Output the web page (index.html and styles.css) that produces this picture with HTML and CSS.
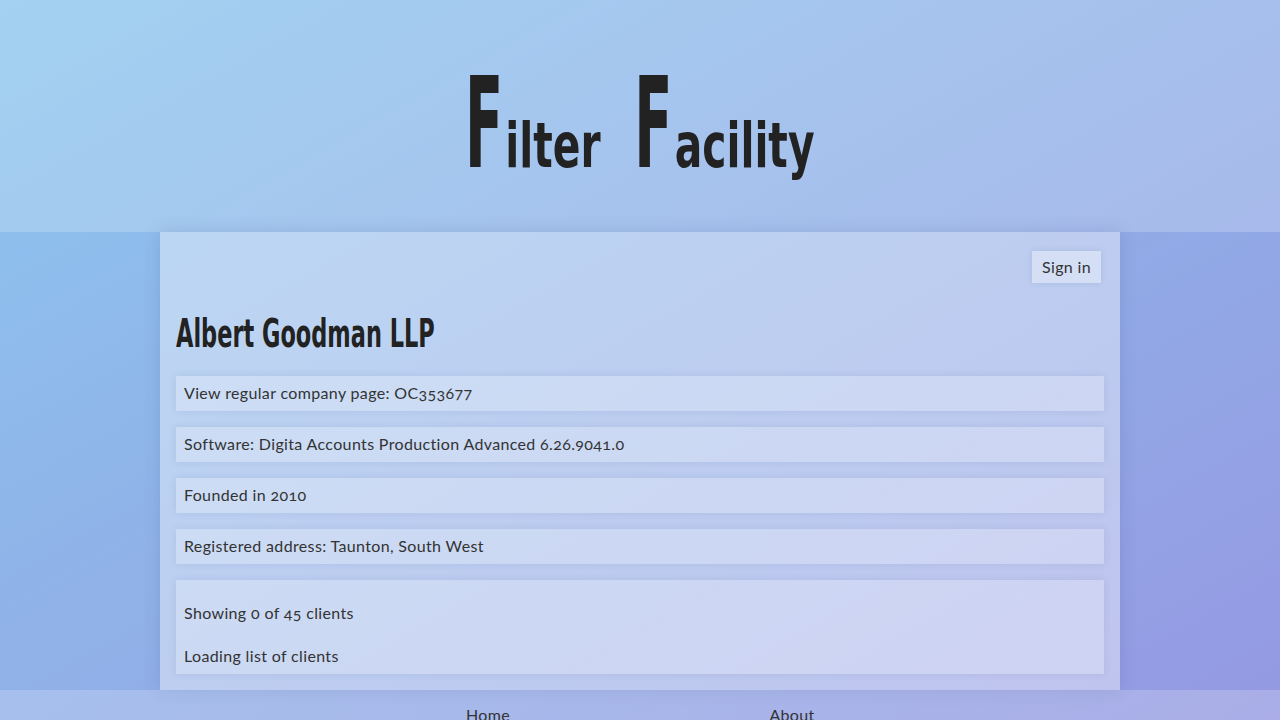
FILE: index.html
```html
<!DOCTYPE html>
<html lang="en">
<head>
<meta charset="utf-8">
<title>Albert Goodman LLP - Filter Facility</title>
<link rel="stylesheet" href="styles.css">
</head>
<body>
<header class="site-header">
  <h1 class="logo"><span class="word"><span class="cap">F</span><span class="rest">ilter</span></span><span class="word"><span class="cap">F</span><span class="rest">acility</span></span></h1>
</header>
<main class="page">
  <div class="toolbar"><button class="btn" type="button">Sign in</button></div>
  <h2 class="company"><span class="company-name">Albert Goodman LLP</span></h2>
  <div class="card"><a class="plain-link" href="#">View regular company page: OC353677</a></div>
  <div class="card">Software: Digita Accounts Production Advanced 6.26.9041.0</div>
  <div class="card">Founded in 2010</div>
  <div class="card">Registered address: Taunton, South West</div>
  <div class="card clients">
    <p class="count">Showing 0 of 45 clients</p>
    <p class="loading">Loading list of clients</p>
  </div>
</main>
<footer class="site-footer">
  <nav class="footer-nav">
    <a href="#">Home</a>
    <a href="#">About</a>
  </nav>
</footer>
</body>
</html>
```
FILE: styles.css
```css
html, body {
  margin: 0;
  padding: 0;
}
body {
  font-family: Lato, "Open Sans", sans-serif;
  font-variant-numeric: oldstyle-nums;
  font-size: 16px;
  letter-spacing: 0.35px;
  color: #333;
  background: linear-gradient(to right bottom, #8cc6ee, #9599e2) fixed;
  min-height: 100vh;
}
.site-header {
  height: 232px;
  background: rgba(255, 255, 255, 0.2);
  display: flex;
  justify-content: center;
  align-items: flex-start;
}
.logo {
  margin: 0;
  padding-top: 60px;
  display: flex;
  gap: 47px;
  font-family: "DejaVu Sans Condensed", "DejaVu Sans", sans-serif;
  font-weight: bold;
  letter-spacing: 0;
  color: #222;
  line-height: 1;
  transform: scaleX(0.72);
  transform-origin: center top;
}
.word {
  display: flex;
  align-items: baseline;
}
.cap {
  display: inline-block;
  font-size: 127px;
  transform: scaleX(0.68);
  transform-origin: left bottom;
  width: 56px;
}
.rest {
  font-size: 63px;
}
.page {
  width: 928px;
  margin: 0 auto;
  padding: 16px;
  background: rgba(255, 255, 255, 0.4);
  box-shadow: 0 0 16px rgba(40, 60, 120, 0.15);
}
.toolbar {
  display: flex;
  justify-content: flex-end;
  padding: 3px 3px 0 0;
}
.btn {
  font-family: inherit;
  font-size: 16px;
  letter-spacing: 0.35px;
  color: #333;
  background: rgba(255, 255, 255, 0.35);
  border: none;
  padding: 5px 10px 7px;
  height: 32px;
  box-shadow: 0 0 6px rgba(40, 60, 120, 0.12);
  cursor: pointer;
}
.company {
  margin: 29px 0 20px;
  font-family: "DejaVu Sans Condensed", "DejaVu Sans", sans-serif;
  font-weight: bold;
  font-size: 39px;
  line-height: 44px;
  letter-spacing: 0;
  color: #222;
}
.company-name {
  display: inline-block;
  transform: scaleX(0.64);
  transform-origin: left center;
}
.card {
  background: rgba(255, 255, 255, 0.24);
  box-shadow: 0 0 8px rgba(40, 60, 120, 0.1);
  padding: 7px 8px 9px;
  line-height: 19px;
  margin-bottom: 16px;
}
.card:last-child {
  margin-bottom: 0;
}
.plain-link {
  color: inherit;
  text-decoration: none;
}
.clients p {
  margin: 0;
}
.clients .count {
  margin-top: 16px;
}
.clients .loading {
  margin-top: 24px;
}
.site-footer {
  background: rgba(255, 255, 255, 0.2);
  padding: 15px 0 20px;
}
.footer-nav {
  width: 608px;
  margin: 0 auto;
  display: grid;
  grid-template-columns: 1fr 1fr;
  justify-items: center;
}
.footer-nav a {
  color: #333;
  text-decoration: none;
}
```
